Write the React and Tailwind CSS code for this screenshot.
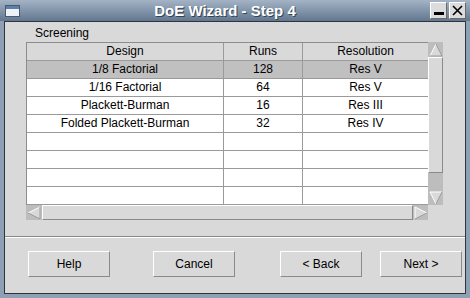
import React from "react";

const rows = [
  { design: "1/8 Factorial", runs: "128", res: "Res V", selected: true },
  { design: "1/16 Factorial", runs: "64", res: "Res V" },
  { design: "Plackett-Burman", runs: "16", res: "Res III" },
  { design: "Folded Plackett-Burman", runs: "32", res: "Res IV" },
  {},
  {},
  {},
  {},
];

function Arrow({ dir }) {
  const pts = {
    up: "7,1 13,13 1,13",
    down: "1,1 13,1 7,13",
    left: "1,7 13,1 13,13",
    right: "1,1 13,7 1,13",
  }[dir];
  return (
    <svg width="14" height="14" viewBox="0 0 14 14">
      <polygon points={pts} fill="#d9d9d9" stroke="#ffffff" strokeWidth="1" />
      {dir === "up" && <line x1="7" y1="1" x2="13" y2="13" stroke="#8a8a8a" />}
      {dir === "up" && <line x1="1" y1="13" x2="13" y2="13" stroke="#8a8a8a" />}
      {dir === "down" && <line x1="13" y1="1" x2="7" y2="13" stroke="#8a8a8a" />}
      {dir === "left" && <line x1="13" y1="1" x2="13" y2="13" stroke="#8a8a8a" />}
      {dir === "left" && <line x1="1" y1="7" x2="13" y2="13" stroke="#8a8a8a" />}
      {dir === "right" && <line x1="1" y1="13" x2="13" y2="7" stroke="#8a8a8a" />}
    </svg>
  );
}

function Button({ label, className }) {
  return (
    <button
      className={
        "h-[26px] w-[82px] border border-t-white border-l-white border-b-[#8a8a8a] border-r-[#8a8a8a] bg-[#d9d9d9] text-[12px] text-black " +
        (className || "")
      }
    >
      {label}
    </button>
  );
}

export default function App() {
  return (
    <div className="flex h-[298px] w-[470px] flex-col bg-[#8fa0b4] font-['Liberation_Sans',Arial,sans-serif] text-[12px] text-black">
      {/* title bar */}
      <div className="flex h-[21px] items-center bg-gradient-to-b from-[#a4b4c6] to-[#62778f]">
        <div className="ml-[5px] flex h-[12px] w-[15px] flex-col border border-[#4a5a6c] bg-[#eef2f6]">
          <div className="h-[3px] bg-[#5b7fb0]" />
        </div>
        <div className="flex-1 text-center text-[15px] font-bold leading-[21px] text-white [text-shadow:1px_1px_0_#34434f]">
          DoE Wizard - Step 4
        </div>
        <div className="mr-[4px] flex gap-[2px]">
          <div className="flex h-[17px] w-[17px] items-end justify-center border border-t-white border-l-white border-b-[#6a6a6a] border-r-[#6a6a6a] bg-[#dcdcdc] pb-[3px]">
            <div className="h-[3px] w-[10px] bg-black" />
          </div>
          <div className="flex h-[17px] w-[17px] items-center justify-center border border-t-white border-l-white border-b-[#6a6a6a] border-r-[#6a6a6a] bg-[#dcdcdc]">
            <svg width="11" height="11" viewBox="0 0 11 11">
              <path d="M1 1 L10 10 M10 1 L1 10" stroke="#000" strokeWidth="1.6" />
            </svg>
          </div>
        </div>
      </div>

      {/* panel */}
      <div className="mx-[4px] mb-[4px] flex flex-1 flex-col border border-[#2c3540] bg-[#d9d9d9]">
        <div className="h-[20px] pl-[30px] pt-[4px] leading-[14px]">Screening</div>

        <div className="ml-[21px] flex h-[178px] w-[417px] flex-col">
          <div className="flex h-[163px]">
            <div className="flex w-[402px] flex-col border-l border-t border-[#8c8c8c] bg-white">
              <div className="flex h-[18px] border-b border-[#9a9a9a] bg-[#d9d9d9] leading-[17px]">
                <div className="w-[197px] border-r border-[#9a9a9a] text-center">Design</div>
                <div className="w-[79px] border-r border-[#9a9a9a] text-center">Runs</div>
                <div className="flex-1 text-center">Resolution</div>
              </div>
              {rows.map((r, i) => (
                <div
                  key={i}
                  className={
                    "flex h-[18px] border-b border-[#9a9a9a] leading-[17px] " +
                    (r.selected ? "bg-[#c0c0c0]" : "bg-white")
                  }
                >
                  <div className="w-[197px] border-r border-[#9a9a9a] text-center">{r.design}</div>
                  <div className="w-[79px] border-r border-[#9a9a9a] text-center">{r.runs}</div>
                  <div className="flex-1 text-center">{r.res}</div>
                </div>
              ))}
            </div>

            {/* vertical scrollbar */}
            <div className="flex w-[15px] flex-col bg-[#bdbdbd]">
              <div className="flex h-[15px] items-center justify-center">
                <Arrow dir="up" />
              </div>
              <div className="h-[116px] border border-t-white border-l-white border-b-[#8a8a8a] border-r-[#8a8a8a] bg-[#d9d9d9]" />
              <div className="flex-1" />
              <div className="flex h-[15px] items-center justify-center">
                <Arrow dir="down" />
              </div>
            </div>
          </div>

          {/* horizontal scrollbar */}
          <div className="flex h-[15px]">
            <div className="flex w-[402px] bg-[#bdbdbd]">
              <div className="flex w-[16px] items-center justify-center">
                <Arrow dir="left" />
              </div>
              <div className="flex-1 border border-t-white border-l-white border-b-[#8a8a8a] border-r-[#8a8a8a] bg-[#d9d9d9]" />
              <div className="flex w-[15px] items-center justify-center">
                <Arrow dir="right" />
              </div>
            </div>
          </div>
        </div>

        <div className="mt-[16px] border-t border-b border-t-[#8a8a8a] border-b-white" />

        <div className="mt-[13px] flex">
          <Button label="Help" className="ml-[23px]" />
          <Button label="Cancel" className="ml-[43px] w-[58px]" />
          <Button label="< Back" className="ml-[45px]" />
          <Button label="Next >" className="ml-[18px]" />
        </div>
      </div>
    </div>
  );
}
